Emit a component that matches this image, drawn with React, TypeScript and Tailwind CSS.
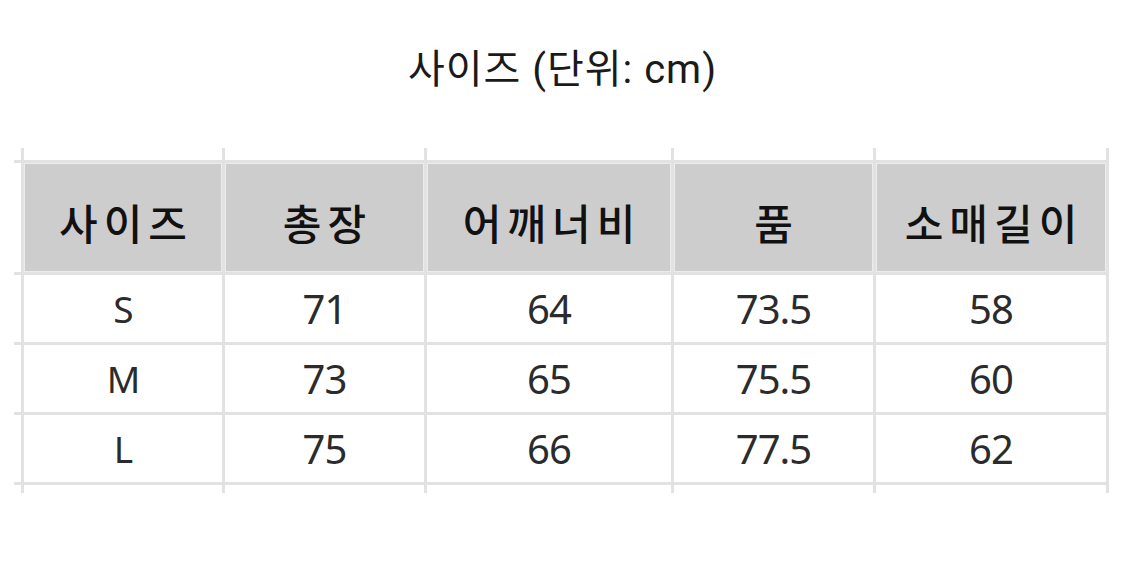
import React from 'react';

const headers = ['사이즈', '총장', '어깨너비', '품', '소매길이'];

const rows = [
  ['S', '71', '64', '73.5', '58'],
  ['M', '73', '65', '75.5', '60'],
  ['L', '75', '66', '77.5', '62'],
];

const App = () => {
  return (
    <div className="w-[1125px] h-[587px] bg-white font-['Noto_Sans','Noto_Sans_CJK_KR',sans-serif]">
      {/* title */}
      <h1 className="pt-[44px] text-center text-[40px] leading-[52px] tracking-[1px] text-[#1a1a1a] font-['Roboto','Noto_Sans_CJK_KR',sans-serif]">
        사이즈 (단위: cm)
      </h1>

      {/* size table, drawn like a cropped spreadsheet */}
      <div className="mt-[52px] ml-[14px] w-fit pr-[3px] bg-[#e2e2e2] grid grid-cols-[7px_198px_199px_244px_199px_230px] grid-rows-[12px_109px_67px_67px_67px_8px] gap-[3px]">
        {/* top stub row */}
        {Array.from({ length: 6 }).map((_, i) => (
          <div key={`t${i}`} className="bg-white" />
        ))}

        {/* header row */}
        <div className="bg-white" />
        {headers.map((h) => (
          <div
            key={h}
            className="bg-[#cdcdcd] shadow-[inset_0_0_0_1px_#ececec] flex items-center justify-center pt-[8px] pl-[6px] text-[42px] font-medium tracking-[6px] text-[#111] font-['Noto_Sans_CJK_KR',sans-serif]"
          >
            {h}
          </div>
        ))}

        {/* data rows */}
        {rows.map((r) => (
          <React.Fragment key={r[0]}>
            <div className="bg-white" />
            {r.map((v, i) => (
              <div
                key={i}
                className={`bg-white flex items-center justify-center tracking-[-1px] text-[#2b2b2b] ${i === 0 ? 'text-[37px]' : 'text-[40px]'}`}
              >
                {v}
              </div>
            ))}
          </React.Fragment>
        ))}

        {/* bottom stub row */}
        {Array.from({ length: 6 }).map((_, i) => (
          <div key={`b${i}`} className="bg-white" />
        ))}
      </div>
    </div>
  );
};

export default App;
